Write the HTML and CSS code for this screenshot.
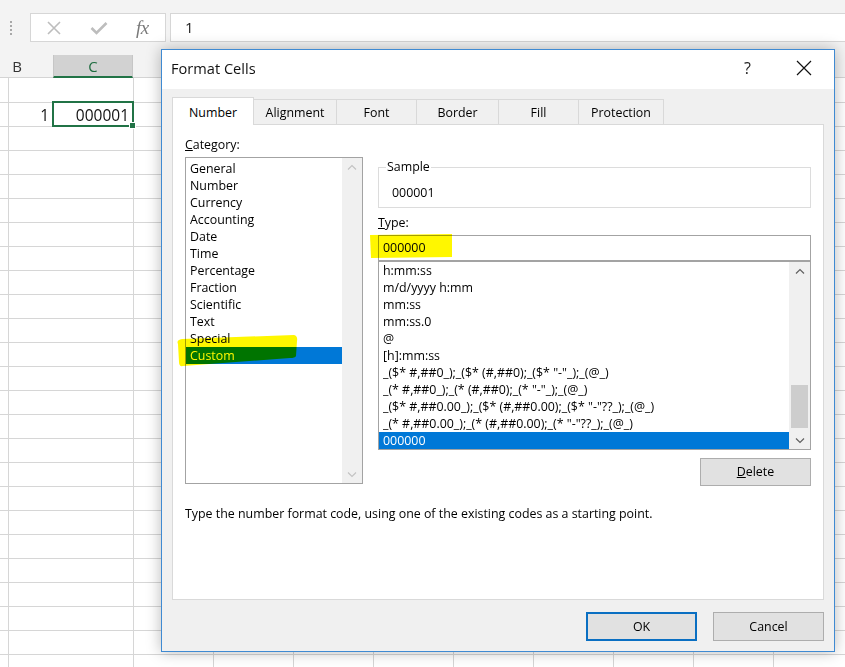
FILE: index.html
```html
<!DOCTYPE html>
<html>
<head>
<meta charset="utf-8">
<link rel="stylesheet" href="styles.css">
</head>
<body>
<div class="app">
  <div class="topbar">
    <div class="grip"><i></i><i></i><i></i><i></i></div>
    <div class="fxbox">
      <svg class="ico-x" width="16" height="16" viewBox="0 0 16 16"><path d="M2 2 L14 14 M14 2 L2 14" stroke="#bdbdbd" stroke-width="1.6" fill="none"/></svg>
      <svg class="ico-ok" width="18" height="14" viewBox="0 0 18 14"><path d="M1.5 7 L6.5 12 L16.5 2" stroke="#bdbdbd" stroke-width="2.6" fill="none"/></svg>
      <span class="fx">fx</span>
    </div>
    <div class="finput">1</div>
  </div>
  <div class="colheads">
    <div class="ch chb">B</div>
    <div class="ch chc">C</div>
    <div class="ch chrest"></div>
  </div>
  <div class="sheet">
    <div class="row"></div>
    <div class="row">
      <div class="cell cb">1</div>
      <div class="cell cc">000001<span class="selbox"><span class="handle"></span></span></div>
    </div>
  </div>
</div>

<div class="dialog">
  <div class="titlebar">
    <span class="title">Format Cells</span>
    <span class="help">?</span>
    <svg class="close" width="16" height="16" viewBox="0 0 16 16"><path d="M1 1 L15 15 M15 1 L1 15" stroke="#111" stroke-width="1.2" fill="none"/></svg>
  </div>
  <div class="dbody">
    <div class="tabs">
      <div class="tab active t1">Number</div>
      <div class="tab t2">Alignment</div>
      <div class="tab t3">Font</div>
      <div class="tab t4">Border</div>
      <div class="tab t5">Fill</div>
      <div class="tab t6">Protection</div>
    </div>
    <div class="panel">
      <div class="cols">
        <div class="leftcol">
          <div class="lbl"><u>C</u>ategory:</div>
          <div class="listbox catlist">
            <div class="items">
              <div class="it">General</div>
              <div class="it">Number</div>
              <div class="it">Currency</div>
              <div class="it">Accounting</div>
              <div class="it">Date</div>
              <div class="it">Time</div>
              <div class="it">Percentage</div>
              <div class="it">Fraction</div>
              <div class="it">Scientific</div>
              <div class="it">Text</div>
              <div class="it">Special</div>
              <div class="it sel">Custom</div>
            </div>
            <div class="sbar">
              <div class="sbtn"><svg width="10" height="6" viewBox="0 0 10 6"><path d="M1 5.5 L5 1.5 L9 5.5" stroke="#c2c2c2" stroke-width="1.1" fill="none"/></svg></div>
              <div class="strack"></div>
              <div class="sbtn"><svg width="10" height="6" viewBox="0 0 10 6"><path d="M1 0.5 L5 4.5 L9 0.5" stroke="#c2c2c2" stroke-width="1.1" fill="none"/></svg></div>
            </div>
          </div>
        </div>
        <div class="rightcol">
          <fieldset class="sample">
            <legend>Sample</legend>
            <div class="sval">000001</div>
          </fieldset>
          <div class="lbl tlbl"><u>T</u>ype:</div>
          <div class="tinput">000000</div>
          <div class="listbox typelist">
            <div class="items">
              <div class="it">h:mm:ss</div>
              <div class="it">m/d/yyyy h:mm</div>
              <div class="it">mm:ss</div>
              <div class="it">mm:ss.0</div>
              <div class="it">@</div>
              <div class="it">[h]:mm:ss</div>
              <div class="it">_($* #,##0_);_($* (#,##0);_($* "-"_);_(@_)</div>
              <div class="it">_(* #,##0_);_(* (#,##0);_(* "-"_);_(@_)</div>
              <div class="it">_($* #,##0.00_);_($* (#,##0.00);_($* "-"??_);_(@_)</div>
              <div class="it">_(* #,##0.00_);_(* (#,##0.00);_(* "-"??_);_(@_)</div>
              <div class="it sel">000000</div>
            </div>
            <div class="sbar">
              <div class="sbtn"><svg width="10" height="6" viewBox="0 0 10 6"><path d="M1 5.5 L5 1.5 L9 5.5" stroke="#606060" stroke-width="1.2" fill="none"/></svg></div>
              <div class="strack"><div class="thumb"></div></div>
              <div class="sbtn"><svg width="10" height="6" viewBox="0 0 10 6"><path d="M1 0.5 L5 4.5 L9 0.5" stroke="#606060" stroke-width="1.2" fill="none"/></svg></div>
            </div>
          </div>
          <div class="delrow"><div class="btn del"><u>D</u>elete</div></div>
        </div>
      </div>
      <div class="desc">Type the number format code, using one of the existing codes as a starting point.</div>
    </div>
    <div class="footer">
      <div class="btn ok">OK</div>
      <div class="btn cancel">Cancel</div>
    </div>
  </div>
</div>

<svg class="marker" width="845" height="667" viewBox="0 0 845 667">
  <path d="M370 235 L452 234 L452 257 L371 258 Z" fill="#fff700"/>
  <path d="M178 344 Q176 340 182 339 L294 335 Q298 336 297 341 L296 356 Q295 358 290 358 L183 366 Q179 367 179 362 Z" fill="#fff700"/>
</svg>
</body>
</html>
```

FILE: styles.css
```css
html, body {
  margin: 0;
  padding: 0;
}
body {
  width: 845px;
  height: 667px;
  overflow: hidden;
  position: relative;
  background: #ffffff;
  font-family: "Open Sans", "Noto Sans", sans-serif;
  color: #000;
}

/* ---------- spreadsheet ---------- */
.topbar {
  height: 55px;
  box-sizing: border-box;
  padding-top: 13px;
  background: #f3f3f3;
  display: flex;
  align-items: flex-start;
}
.grip {
  width: 30px;
  height: 29px;
  display: flex;
  flex-direction: column;
  align-items: center;
  justify-content: center;
  gap: 2px;
  padding-right: 8px;
  box-sizing: border-box;
}
.grip i {
  display: block;
  width: 2px;
  height: 2px;
  background: #a8a8a8;
}
.fxbox {
  width: 136px;
  height: 29px;
  box-sizing: border-box;
  background: #fff;
  border: 1px solid #d6d6d6;
  display: flex;
  align-items: center;
  padding-left: 15px;
}
.ico-ok {
  margin-left: 28px;
}
.fx {
  margin-left: 28px;
  font-family: "Liberation Serif", serif;
  font-style: italic;
  font-size: 19px;
  color: #7a7a7a;
  letter-spacing: -0.5px;
  line-height: 1;
}
.finput {
  margin-left: 4px;
  flex: 1;
  height: 29px;
  box-sizing: border-box;
  background: #fff;
  border: 1px solid #d6d6d6;
  border-right: none;
  padding-left: 14px;
  font-size: 15px;
  line-height: 27px;
  color: #222;
}
.colheads {
  height: 23px;
  display: flex;
  background: #f3f3f3;
}
.ch {
  box-sizing: border-box;
  height: 23px;
  font-size: 15px;
  line-height: 22px;
  color: #333;
  text-align: center;
  border-bottom: 1px solid #d4d4d4;
}
.chb {
  width: 53px;
  padding-right: 31px;
  text-align: right;
}
.chc {
  width: 80px;
  background: #d2d2d2;
  color: #1e6b3f;
  border-bottom: 2px solid #217346;
  border-left: 1px solid #c6c6c6;
  border-right: 1px solid #c6c6c6;
}
.chrest {
  flex: 1;
}
.sheet {
  height: 589px;
  background-image:
    repeating-linear-gradient(to right, transparent 0 79px, #d6d6d6 79px 80px),
    repeating-linear-gradient(to bottom, transparent 0 23px, #d6d6d6 23px 24px);
  background-position: 54px 0, 0 1px;
}
.row {
  height: 24px;
  display: flex;
}
.cell {
  box-sizing: border-box;
  height: 24px;
  font-size: 15.5px;
  line-height: 26px;
  text-align: right;
  color: #111;
}
.cb {
  width: 53px;
  padding-right: 4px;
}
.cc {
  width: 80px;
  padding-right: 4px;
  position: relative;
}
.selbox {
  position: absolute;
  left: -1px;
  top: -1px;
  width: 82px;
  height: 26px;
  box-sizing: border-box;
  border: 2px solid #217346;
}
.handle {
  position: absolute;
  right: -4px;
  bottom: -4px;
  width: 5px;
  height: 5px;
  background: #217346;
  border: 1px solid #fff;
}

/* ---------- dialog ---------- */
.dialog {
  position: absolute;
  left: 161px;
  top: 49px;
  width: 674px;
  height: 603px;
  box-sizing: border-box;
  border: 1px solid #3f8ad2;
  background: #f0f0f0;
  box-shadow: 0 0 14px rgba(0, 0, 0, 0.28);
  display: flex;
  flex-direction: column;
  font-size: 12.4px;
}
.titlebar {
  height: 39px;
  flex: none;
  background: #fff;
  display: flex;
  align-items: center;
  padding-left: 9px;
  padding-bottom: 4px;
  box-sizing: border-box;
}
.title {
  font-size: 14.6px;
  color: #111;
  flex: 1;
}
.help {
  font-size: 16px;
  color: #222;
  margin-right: 45px;
}
.close {
  margin-right: 22px;
}
.dbody {
  flex: 1;
  padding: 8px 10px 0 10px;
  display: flex;
  flex-direction: column;
}
.tabs {
  height: 27px;
  display: flex;
  align-items: flex-end;
}
.tab {
  box-sizing: border-box;
  height: 25px;
  line-height: 25px;
  text-align: center;
  background: #f0f0f0;
  border: 1px solid #d9d9d9;
  border-bottom: none;
  margin-left: -1px;
}
.tab.active {
  height: 28px;
  line-height: 29px;
  margin-bottom: -1px;
  margin-left: 0;
  background: #fff;
  position: relative;
  z-index: 1;
}
.t1 { width: 82px; }
.t2 { width: 84px; }
.t3 { width: 81px; }
.t4 { width: 83px; }
.t5 { width: 81px; }
.t6 { width: 86px; }

.panel {
  height: 476px;
  box-sizing: border-box;
  background: #fff;
  border: 1px solid #d9d9d9;
  padding: 12px 0 0 12px;
}
.cols {
  display: flex;
  gap: 15px;
}
.leftcol {
  width: 178px;
}
.lbl {
  height: 20px;
  line-height: 16px;
}
.listbox {
  box-sizing: border-box;
  border: 1px solid #a3a3a3;
  display: flex;
  background: #fff;
}
.catlist {
  height: 327px;
}
.items {
  flex: 1;
}
.catlist .items {
  padding-top: 2px;
}
.it {
  height: 17px;
  line-height: 17px;
  padding-left: 4px;
  white-space: nowrap;
}
.it.sel {
  background: #0078d7;
  color: #fff;
}
.sbar {
  width: 20px;
  background: #f0f0f0;
  display: flex;
  flex-direction: column;
}
.sbtn {
  height: 17px;
  display: flex;
  align-items: center;
  justify-content: center;
}
.strack {
  flex: 1;
}
.rightcol {
  width: 433px;
}
.sample {
  margin: 22px 0 0 0;
  padding: 10px 0 6px 13px;
  border: 1px solid #dcdcdc;
  min-width: 0;
}
.sample legend {
  padding: 0 1px;
  margin-left: -6px;
  line-height: 16px;
}
.sval {
  line-height: 16px;
}
.tlbl {
  margin-top: 7px;
}
.tinput {
  height: 26px;
  box-sizing: border-box;
  border: 1px solid #a3a3a3;
  padding-left: 4px;
  line-height: 24px;
}
.typelist {
  height: 189px;
}
.typelist .items {
  overflow: hidden;
}
.typelist .it {
  padding-left: 4px;
}
.typelist .sbar {
  width: 21px;
}
.typelist .strack {
  padding-top: 106px;
}
.thumb {
  width: 17px;
  height: 43px;
  margin-left: 2px;
  background: #cdcdcd;
}
.delrow {
  display: flex;
  justify-content: flex-end;
  margin-top: 8px;
}
.btn {
  box-sizing: border-box;
  width: 111px;
  height: 28px;
  background: #e1e1e1;
  border: 1px solid #adadad;
  text-align: center;
  line-height: 26px;
}
.desc {
  margin-top: 20px;
  line-height: 16px;
}
.footer {
  display: flex;
  justify-content: flex-end;
  gap: 16px;
  padding-top: 12px;
}
.footer .btn {
  height: 29px;
  line-height: 27px;
}
.btn.ok {
  border: 2px solid #0a6fc2;
  line-height: 25px;
}

/* highlighter marks drawn over the screenshot */
.marker {
  position: absolute;
  left: 0;
  top: 0;
  pointer-events: none;
  mix-blend-mode: multiply;
}
```
